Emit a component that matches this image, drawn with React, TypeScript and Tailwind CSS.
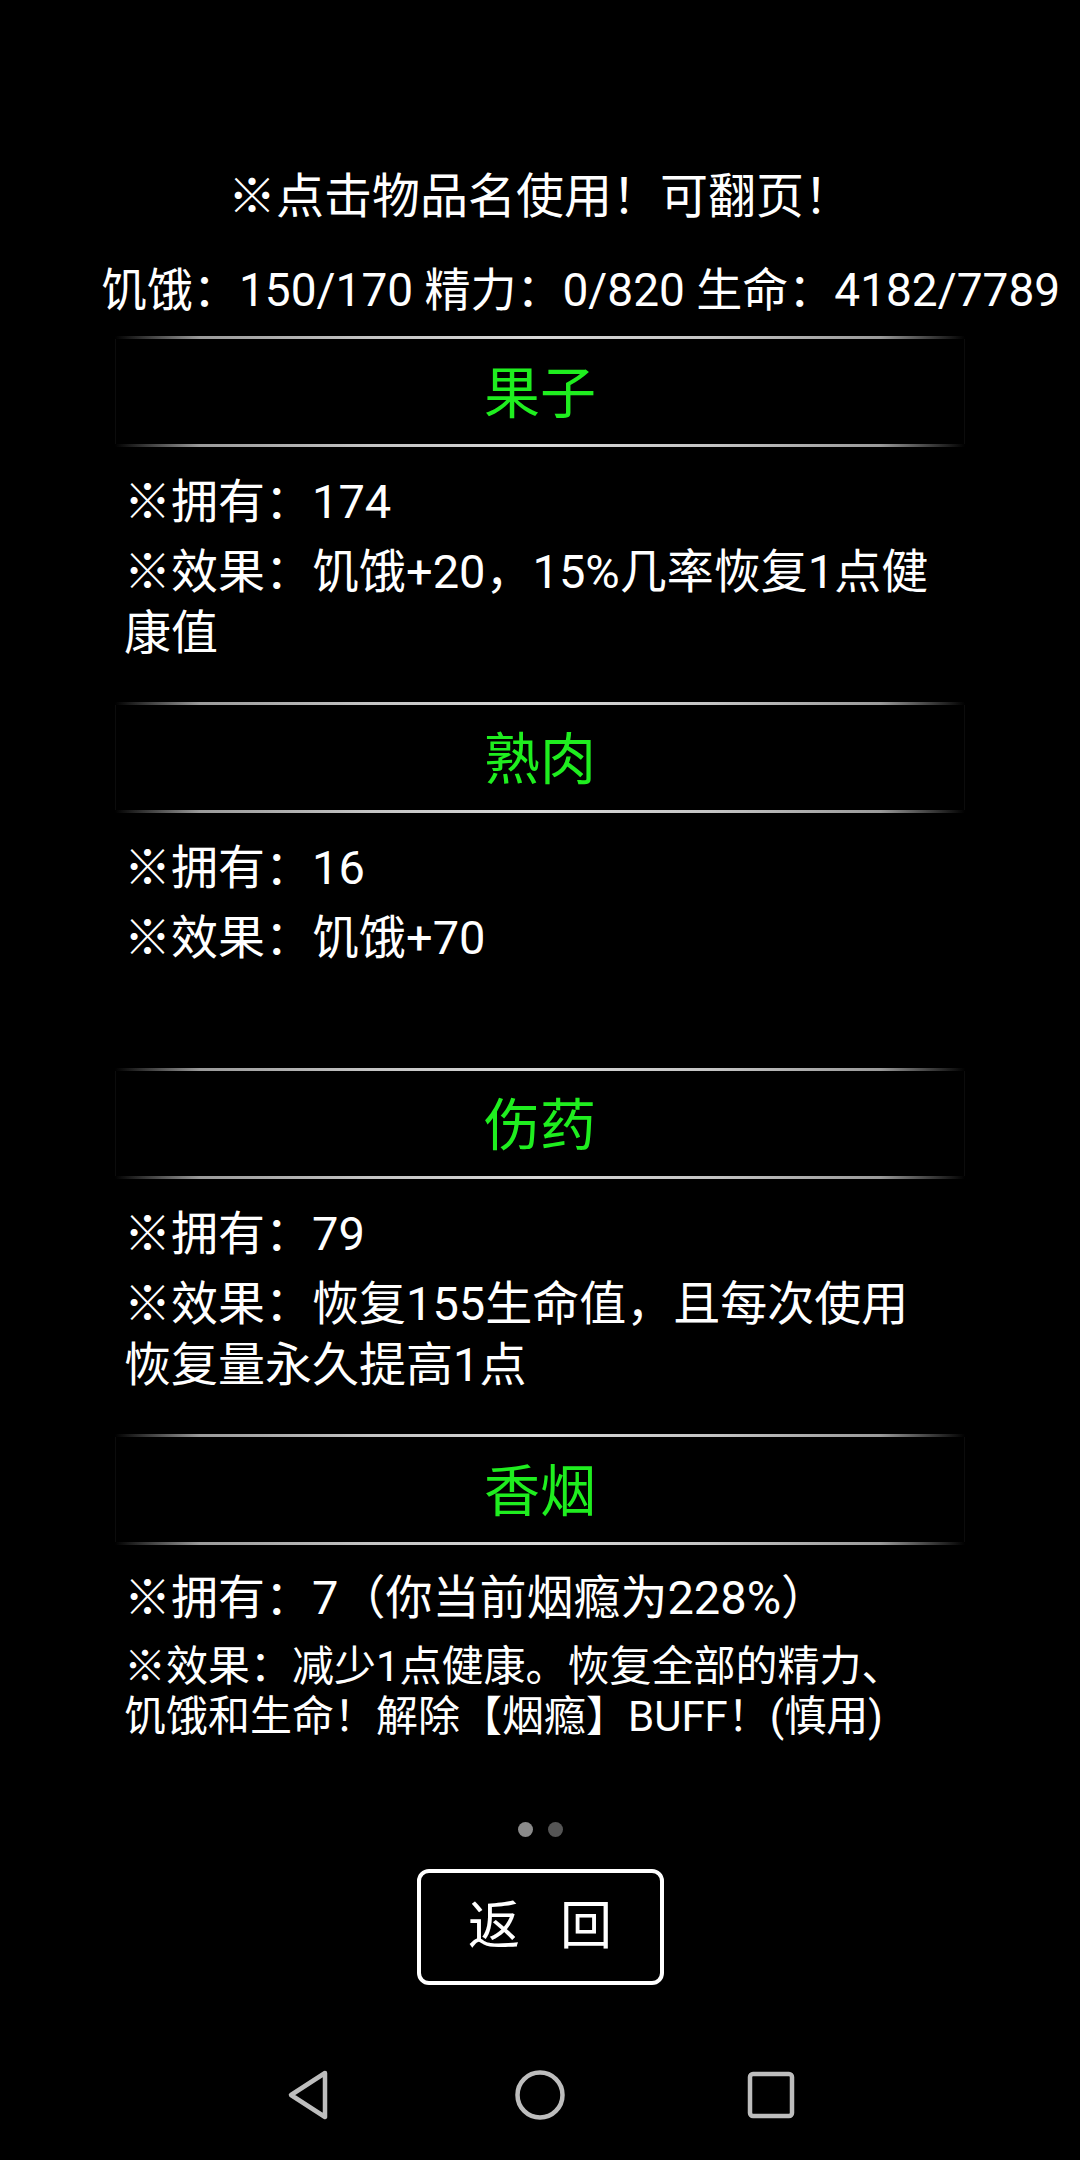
import React from 'react';

type Item = {
  name: string;
  owned: string;
  effect: string[];
  small?: boolean;
};

const items: Item[] = [
  { name: '果子', owned: '※拥有：174', effect: ['※效果：饥饿+20，15%几率恢复1点健', '康值'] },
  { name: '熟肉', owned: '※拥有：16', effect: ['※效果：饥饿+70'] },
  { name: '伤药', owned: '※拥有：79', effect: ['※效果：恢复155生命值，且每次使用', '恢复量永久提高1点'] },
  {
    name: '香烟',
    owned: '※拥有：7（你当前烟瘾为228%）',
    effect: ['※效果：减少1点健康。恢复全部的精力、', '饥饿和生命！解除【烟瘾】BUFF！(慎用)'],
    small: true,
  },
];

const font = { fontFamily: 'Roboto, "Noto Sans CJK SC", sans-serif' };

const Divider = () => (
  <div className="h-[3px] w-full bg-[linear-gradient(to_right,transparent_0%,#9a9a9a_10%,#c4c4c4_30%,#d8d8d8_50%,#c4c4c4_70%,#9a9a9a_90%,transparent_100%)]" />
);

const ItemCard = ({ item }: { item: Item }) => (
  <div className="h-[366px] w-[850px] flex flex-col">
    <Divider />
    {/* Header */}
    <div className="h-[105px] flex items-center justify-center border-x border-[#0c0c0c]">
      <span className="text-[56px] leading-none text-[#1fee1f] pt-[4px]">{item.name}</span>
    </div>
    <Divider />
    {/* Details */}
    <div className={`pl-[9px] text-white whitespace-nowrap ${item.small ? 'pt-[22px]' : 'pt-[24px]'}`}>
      <p className="text-[47px] leading-[61px]">{item.owned}</p>
      {item.small ? (
        <p className="text-[42px] leading-[50px] mt-[14px]">
          {item.effect.map((l, i) => (
            <span key={i} className="block">{l}</span>
          ))}
        </p>
      ) : (
        <p className="text-[47px] leading-[61px] mt-[9px]">
          {item.effect.map((l, i) => (
            <span key={i} className="block">{l}</span>
          ))}
        </p>
      )}
    </div>
  </div>
);

export default function App() {
  return (
    <div className="w-[1080px] h-[2160px] bg-black flex flex-col overflow-hidden" style={font}>
      <div className="pt-[170px] text-center text-white text-[48px] leading-[54px]">
        ※点击物品名使用！可翻页！
      </div>
      <div className="mt-[39px] pl-[101px] text-white text-[46px] leading-[54px] whitespace-nowrap">
        饥饿：150/170 精力：0/820 生命：4182/7789
      </div>

      <div className="mt-[19px] pl-[115px] flex flex-col">
        {items.map((item) => (
          <ItemCard key={item.name} item={item} />
        ))}
      </div>

      {/* Page dots */}
      <div className="mt-[22px] flex justify-center gap-[15px]">
        <div className="w-[15px] h-[15px] rounded-full bg-[#8a8a8a]" />
        <div className="w-[15px] h-[15px] rounded-full bg-[#555555]" />
      </div>

      <div className="mt-[32px] flex justify-center">
        <button className="w-[247px] h-[116px] border-[4px] border-white rounded-[12px] bg-black text-white text-[52px] leading-none flex items-center justify-center gap-[40px]">
          <span>返</span>
          <span>回</span>
        </button>
      </div>

      <div className="flex-1" />

      {/* Nav bar */}
      <div className="h-[130px] flex items-center justify-center">
        <div className="w-[231px] flex justify-center">
          <svg width="48" height="52" viewBox="0 0 48 52" fill="none">
            <path d="M40 4 L6 26 L40 48 Z" stroke="#bdbdbd" strokeWidth="4.5" strokeLinejoin="round" />
          </svg>
        </div>
        <div className="w-[231px] flex justify-center">
          <svg width="52" height="52" viewBox="0 0 52 52" fill="none">
            <circle cx="26" cy="26" r="22.5" stroke="#bdbdbd" strokeWidth="4.5" />
          </svg>
        </div>
        <div className="w-[231px] flex justify-center">
          <svg width="48" height="48" viewBox="0 0 48 48" fill="none">
            <rect x="3" y="3" width="42" height="42" rx="3" stroke="#bdbdbd" strokeWidth="4.5" />
          </svg>
        </div>
      </div>
    </div>
  );
}
